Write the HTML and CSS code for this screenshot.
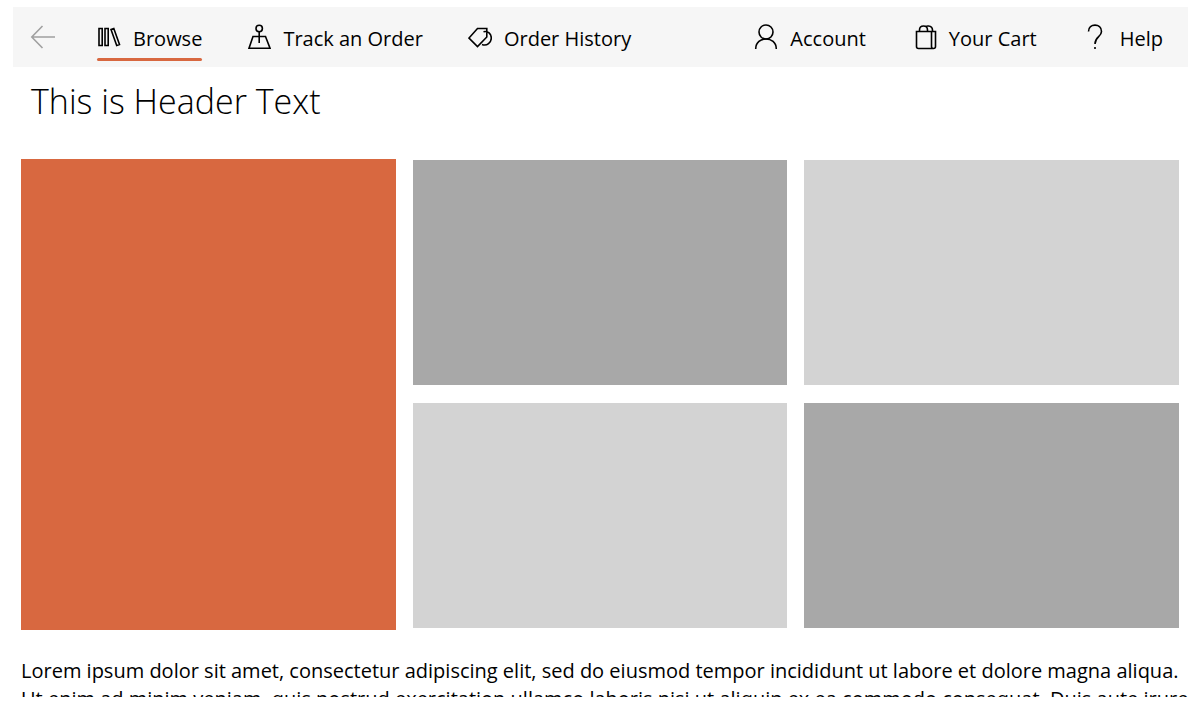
FILE: index.html
```html
<!DOCTYPE html>
<html lang="en">
<head>
<meta charset="utf-8">
<title>Browse</title>
<link rel="stylesheet" href="styles.css">
</head>
<body>
<header class="bar">
  <button class="back" type="button" aria-label="Back">
    <svg class="icon" viewBox="0 0 26 26"><path d="M2 13H25M12.500 2L1.800 13L12.500 24"/></svg>
  </button>
  <nav class="nav" aria-label="Main">
    <a class="item current" href="#" aria-current="page">
      <svg class="icon" viewBox="0 0 24 26"><path d="M2 4.500H5.200V21.500H2ZM8 4.500H11.200V21.500H8ZM14 5.500L16.800 4.500L22.500 20.500L19.700 21.500Z"/></svg>
      <span>Browse</span>
    </a>
    <a class="item" href="#">
      <svg class="icon" viewBox="0 0 24 26"><circle cx="12.200" cy="4.500" r="3.200"/><path d="M12.200 8V19M6 12.500H18.500L23 24.200H2Z"/></svg>
      <span>Track an Order</span>
    </a>
    <a class="item" href="#">
      <svg class="icon" viewBox="0 0 24 26"><path d="M9.500 4.500H18.800V13L9.500 22.500L1 14ZM15.500 7.700C20 6.500 23.300 10 23.300 14C23.300 18.500 19 22.500 14 20.500"/></svg>
      <span>Order History</span>
    </a>
  </nav>
  <nav class="nav" aria-label="Account">
    <a class="item" href="#">
      <svg class="icon" viewBox="0 0 24 26"><circle cx="12" cy="8" r="7"/><path d="M1.700 25C1.700 11.600 22.300 11.600 22.300 25"/></svg>
      <span>Account</span>
    </a>
    <a class="item" href="#">
      <svg class="icon" viewBox="0 0 24 26"><path d="M3.500 7.500H22.500V22.500Q22.500 24.500 20.500 24.500H5.500Q3.500 24.500 3.500 22.500ZM18.500 7.500V22.500Q18.500 24.500 20.500 24.500M6.500 7.500V6Q6.500 2 10.500 2Q14.500 2 14.500 6V7.500M12.500 2.500Q14 1.800 15.500 2Q19.500 2.500 19.500 6V7.500"/></svg>
      <span>Your Cart</span>
    </a>
    <a class="item" href="#">
      <svg class="icon" viewBox="0 0 24 26"><path d="M4.500 7.500C4.500 -1 17.500 -1 17.500 7.500C17.500 13 11 12.500 11 20M11 23V25"/></svg>
      <span>Help</span>
    </a>
  </nav>
</header>
<main class="page">
  <h1 class="title">This is Header Text</h1>
  <section class="tiles" aria-label="Featured">
    <div class="tile feature"></div>
    <div class="tile dark"></div>
    <div class="tile light"></div>
    <div class="tile light"></div>
    <div class="tile dark"></div>
  </section>
  <p class="copy">Lorem ipsum dolor sit amet, consectetur adipiscing elit, sed do eiusmod tempor incididunt ut labore et dolore magna aliqua.<br>Ut enim ad minim veniam, quis nostrud exercitation ullamco laboris nisi ut aliquip ex ea commodo consequat. Duis aute irure</p>
</main>
</body>
</html>
```

FILE: styles.css
```css
* { box-sizing: border-box; }
body {
  margin: 0;
  height: 100vh;
  padding: 7px 0 16px;
  display: flex;
  flex-direction: column;
  overflow: hidden;
  background: #fff;
  color: #000;
  font-family: "Open Sans", "Noto Sans", sans-serif;
  font-size: 20px;
}
.bar {
  display: flex;
  align-items: stretch;
  flex: none;
  height: 60px;
  margin: 0 15px 0 13px;
  padding: 0 25px 0 17px;
  background: #f6f6f6;
}
.back {
  width: 26px;
  margin-right: 41px;
  padding: 0;
  border: 0;
  background: none;
  color: #a0a0a0;
}
.icon {
  display: block;
  flex: none;
  width: 24px;
  height: 26px;
  fill: none;
  stroke: currentColor;
  stroke-width: 1.6;
}
.back .icon { width: 26px; }
.nav { display: flex; gap: 45px; }
.nav + .nav { margin-left: auto; gap: 47px; }
.item {
  display: flex;
  align-items: center;
  gap: 12px;
  color: inherit;
  text-decoration: none;
  white-space: nowrap;
}
.item span { padding-top: 2px; }
.item.current { position: relative; }
.item.current::after {
  content: "";
  position: absolute;
  left: 0;
  right: 0;
  bottom: 6px;
  height: 3px;
  border-radius: 2px;
  background: #d86840;
}
.page {
  display: flex;
  flex-direction: column;
  flex: 1;
  min-height: 0;
  padding: 0 24px 0 21px;
}
.title {
  margin: 10px 10px 34px;
  font-size: 34px;
  font-weight: 300;
  line-height: 49px;
}
.tiles {
  display: grid;
  flex: none;
  grid-template-columns: repeat(3, 1fr);
  grid-auto-rows: 225px;
  gap: 18px 17px;
}
.feature {
  grid-row: span 2;
  margin: -1px 0 -2px;
  background: #d86840;
}
.dark { background: #a8a8a8; }
.light { background: #d3d3d3; }
.copy {
  flex: 1;
  min-height: 0;
  margin: 29px 0 0;
  overflow-x: visible;
  overflow-y: clip;
  line-height: 28px;
  white-space: nowrap;
}
```
